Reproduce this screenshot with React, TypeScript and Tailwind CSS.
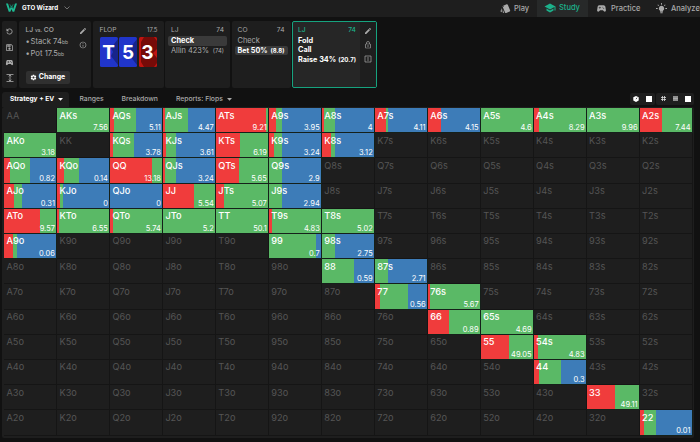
import React from "react";
import { MdEdit, MdInfoOutline, MdSchool, MdSettings, MdOutlineLock, MdRefresh, MdOutlineSave, MdSportsEsports, MdStyle } from "react-icons/md";

// Hand -> [raise share, call share, EV]; the remaining share is fold.
const HANDS: Record<string, [number, number, string]> = {
  AKs: [0, 1, "7.56"], AQs: [0.07, 0.43, "5.11"], AJs: [0.04, 0.44, "4.47"], ATs: [0.965, 0.035, "9.21"],
  A9s: [0.13, 0.12, "3.95"], A8s: [0.035, 0.215, "4"], A7s: [0.21, 0.035, "4.11"], A6s: [0.245, 0, "4.15"],
  A5s: [0, 1, "4.6"], A4s: [0.1, 0.9, "8.29"], A3s: [0, 1, "9.96"], A2s: [0.43, 0.57, "7.44"],
  AKo: [0, 1, "3.18"], KQs: [0.055, 0.405, "3.78"], KJs: [0.055, 0.195, "3.61"], KTs: [0.455, 0.545, "6.19"],
  K9s: [0.1, 0.15, "3.24"], K8s: [0.17, 0.08, "3.12"],
  AQo: [0.11, 0.395, "0.82"], KQo: [0.13, 0.29, "0.14"], QQ: [0.8, 0.2, "13.18"], QJs: [0.035, 0.215, "3.24"],
  QTs: [0.435, 0.565, "5.65"], Q9s: [0, 0.25, "2.9"],
  AJo: [0.2, 0.14, "0.31"], KJo: [0.065, 0.05, "0"], QJo: [0, 0, "0"], JJ: [0.59, 0.41, "5.54"],
  JTs: [0.155, 0.845, "5.07"], J9s: [0, 0.25, "2.94"],
  ATo: [0.69, 0.31, "9.57"], KTo: [0.04, 0.96, "6.55"], QTo: [0.055, 0.945, "5.74"], JTo: [0, 1, "5.2"],
  TT: [0, 1, "50.1"], T9s: [0.055, 0.945, "4.83"], T8s: [0, 1, "5.02"],
  A9o: [0.17, 0.085, "0.06"], "99": [0, 0.905, "0.7"], "98s": [0, 0.25, "2.75"],
  "88": [0, 0.61, "0.59"], "87s": [0, 0.25, "2.71"], "77": [0.1, 0.54, "0.56"], "76s": [0.03, 0.97, "5.67"],
  "66": [0.4, 0.6, "0.89"], "65s": [0, 1, "4.69"], "55": [0.54, 0.46, "49.05"], "54s": [0.08, 0.92, "4.83"],
  "44": [0.1, 0.41, "0.3"], "33": [0.53, 0.47, "49.11"], "22": [0.07, 0.23, "0.01"],
};
const RANKS = "AKQJT98765432".split("");

function Cell({ hand }: { hand: string }) {
  const d = HANDS[hand];
  if (!d)
    return (
      <div className="border-r border-b border-[#151515] bg-[#1e1e1e] pt-[1.5px] pl-[2.5px] text-[9.2px] leading-[11px] text-[#555]">{hand}</div>
    );
  const a = d[0] * 100;
  const b = (d[0] + d[1]) * 100;
  return (
    <div
      className="flex flex-col justify-between overflow-hidden border-r border-b border-[#15201a] bg-clip-padding pt-[1.5px] pr-[1px] pl-[2.5px] text-white"
      style={{ backgroundImage: `linear-gradient(90deg,#f03c3c ${a}%,#5ab966 ${a}%,#5ab966 ${b}%,#3d7cb8 ${b}%)` }}
    >
      <span className="text-[9.2px] leading-[11px] font-medium">{hand}</span>
      <span className="self-end text-[7.5px] leading-[9px]">{d[2]}</span>
    </div>
  );
}

function Card({ rank, red }: { rank: string; red?: boolean }) {
  return (
    <div className={`grid h-[30px] w-[18px] place-items-center overflow-hidden rounded-[1.5px] ${red ? "bg-[#c01410]" : "bg-[#2035ca]"}`}>
      <svg viewBox="0 0 18 30" className="col-start-1 row-start-1 h-[30px] w-[18px]">
        {red ? (
          <path d="M5 0h10l3 4v8l-4 4 4 5v5l-3 4H5l-3-5V5z" fill="#760b08" />
        ) : (
          <path d="M18 2v26l-7-9 2-4-2-4z" fill="#17248b" />
        )}
      </svg>
      <span className="col-start-1 row-start-1 text-[19px] leading-none font-bold text-white">{rank}</span>
    </div>
  );
}

function Caret() {
  return (
    <svg viewBox="0 0 5 3" className="mb-[1px] ml-[4px] h-[3px] w-[5px]" fill="currentColor">
      <path d="M0 0h5L2.5 2.7z" />
    </svg>
  );
}

function Panel({ name, children, width }: { name: string; children: React.ReactNode; width: string }) {
  return (
    <div className={`${width} shrink-0 rounded-[2px] bg-[#1e1e1e] px-[3px] pt-[4px] text-[#aaa]`}>
      <div className="flex justify-between px-[3px] text-[6.7px] leading-[10px]">
        <span>{name}</span>
        <span>74</span>
      </div>
      <div className="mt-[1px] text-[7.4px] leading-[9.5px]">{children}</div>
    </div>
  );
}

export default function App() {
  return (
    <div className="flex h-[442px] w-[700px] flex-col overflow-hidden bg-[#111] font-['Inter','Liberation_Sans',sans-serif] text-[#aaa]">
      <header className="flex h-[17px] shrink-0 items-center bg-[#1e1e1e] pb-[2px] whitespace-nowrap">
        <svg viewBox="0 0 12 9" className="ml-[6px] h-[9px] w-[11px]" fill="none">
          <path d="M0 0h2.2l2 6L6 2.2 7.8 6l2-6H12L9 9H7.2L6 6 4.8 9H3z" fill="#1db992" />
          <path d="M4.2 1L6 5l1.8-4" stroke="#137961" />
        </svg>
        <span className="ml-[5px] text-[6.2px] font-bold text-white">GTO Wizard</span>
        <svg viewBox="0 0 6 4" className="ml-[6px] h-[4px] w-[6px]" fill="none" stroke="#888" strokeWidth=".8"><path d="M.5.5L3 3 5.5.5" /></svg>
        <nav className="ml-auto flex h-[17px] translate-y-[1px] text-[7.5px] font-medium">
          <div className="flex w-[37px] items-center gap-[3px]"><MdStyle size={11} />Play</div>
          <div className="flex w-[51px] items-center gap-[3px] bg-[#272929] pb-[1px] pl-[7px] text-[#1cb18b]"><MdSchool size={12} />Study</div>
          <div className="flex w-[60px] items-center gap-[4px] pl-[8px]"><MdSportsEsports size={11} />Practice</div>
          <div className="flex w-[52px] items-center gap-[4px] pl-[8px]">
            <svg viewBox="0 0 12 12" className="h-[11px] w-[11px] shrink-0" fill="currentColor">
              <path d="M6 3a3 3 0 0 0-1.6 5.5v1h3.2v-1A3 3 0 0 0 6 3zM4.7 10h2.6v1.3H4.7zM5.5 0h1v1.8h-1zM0 5.5h1.8v1H0zM10.2 5.5H12v1h-1.8zM1.5 2.2l.7-.7 1.2 1.2-.7.7zM9.8 1.5l.7.7-1.2 1.2-.7-.7z" />
            </svg>
            Analyze
          </div>
        </nav>
      </header>

      <section className="mt-[4px] ml-[2px] flex h-[67px] shrink-0 gap-[1.5px] whitespace-nowrap">
        <aside className="flex w-[15px] shrink-0 flex-col items-center justify-between rounded-[2px] bg-[#1e1e1e] pt-[6px] pb-[6px]">
          <MdRefresh size={9} className="-scale-x-100" />
          <MdOutlineSave size={9} />
          <MdSportsEsports size={9} />
          <svg viewBox="0 0 8 8" className="h-[8px] w-[8px]" fill="none" stroke="currentColor" strokeWidth=".8"><path d="M.5.5h7M.5 7.5h7M4 1v6M2.7 2.3L4 1l1.3 1.3M2.7 5.7L4 7l1.3-1.3" /></svg>
        </aside>
        <div className="flex w-[72.5px] shrink-0 justify-between rounded-[2px] bg-[#1e1e1e] pt-[4px] pr-[4px] pl-[7px]">
          <div className="flex flex-col items-start">
            <div className="text-[6.7px] leading-[10px] font-medium">LJ <span className="text-[5px]">vs.</span> CO</div>
            <div className="mt-[1px] text-[7.7px] leading-[11px]">
              <div className="flex h-[11.5px] items-baseline"><span className="w-[5px]">•</span>Stack 74<span className="text-[5px]">bb</span></div>
              <div className="flex h-[11.5px] items-baseline"><span className="w-[5px]">•</span>Pot 17.5<span className="text-[5px]">bb</span></div>
            </div>
            <div className="mt-[11.5px] flex h-[13px] w-[44px] items-center justify-center gap-[2px] rounded-[2px] bg-[#303030] text-[7px] font-bold text-white"><MdSettings size={7} />Change</div>
          </div>
          <div className="flex flex-col gap-[6px] pt-[1.5px]"><MdEdit size={8} /><MdInfoOutline size={8} /></div>
        </div>
        <div className="w-[71px] shrink-0 rounded-[2px] bg-[#1e1e1e] pt-[4px] pr-[6px] pl-[7px]">
          <div className="flex justify-between text-[6.7px] leading-[10px]"><span>FLOP</span><span className="text-[6px]">17.5</span></div>
          <div className="mt-[2px] flex gap-[1.5px]"><Card rank="T" /><Card rank="5" /><Card rank="3" red /></div>
        </div>
        <Panel name="LJ" width="w-[65px]">
          <div className="rounded-[2px] bg-[#3a3a3a] px-[3px] font-bold text-white">Check</div>
          <div className="flex items-center px-[3px]">Allin 423%<span className="ml-auto text-[6px]">(74)</span></div>
        </Panel>
        <Panel name="CO" width="w-[59px]">
          <div className="px-[3px]">Check</div>
          <div className="flex items-center rounded-[2px] bg-[#3a3a3a] px-[3px] text-[7.2px] font-bold text-white">Bet 50%<span className="ml-auto text-[6px]">(8.8)</span></div>
        </Panel>
        <div className="flex w-[85px] shrink-0 justify-between rounded-[2px] border border-[#16a37f] bg-[#262626] pl-[5px]">
          <div className="w-[58px] pt-[3px]">
            <div className="flex justify-between text-[6.7px] leading-[10px] font-medium text-[#1cb18b]"><span>LJ</span><span>74</span></div>
            <div className="mt-[1px] text-[7.3px] leading-[9.4px] font-bold text-white">Fold<br />Call<div className="flex items-center justify-between">Raise 34%<span className="text-[6.1px]">(20.7)</span></div></div>
          </div>
          <div className="flex w-[16px] flex-col items-center gap-[6.2px] bg-[#1e1e1e] pt-[4.5px]">
            <MdEdit size={8} /><MdOutlineLock size={8} />
            <svg viewBox="0 0 8 8" className="h-[8px] w-[8px]" fill="none" stroke="currentColor" strokeWidth=".7"><path d="M3 1H1v6h2M5 1h2v6H5M4 0v8" /></svg>
          </div>
        </div>
      </section>

      <div className="mt-[4px] ml-[2px] flex h-[15px] shrink-0 items-center text-[6.8px] font-medium whitespace-nowrap">
        <div className="flex h-[15px] w-[67px] items-center rounded-t-[3px] bg-[#1e1e1e] pl-[8px] text-[6.6px] font-bold text-white">Strategy + EV<Caret /></div>
        <span className="ml-[10.5px] w-[42px]">Ranges</span>
        <span className="w-[54.5px]">Breakdown</span>
        <span>Reports: Flops</span>
        <Caret />
        <div className="mr-[6px] ml-auto flex h-[12px] -translate-y-[1px] gap-[1px]">
          <div className="flex w-[25px] items-center justify-around rounded-[2px] bg-[#1e1e1e]">
            <svg viewBox="0 0 6 6" className="h-[6px] w-[6px]"><path d="M3 0l2.7 1.3v3.2L3 6 .3 4.5V1.3z" fill="#fff" /><path d="M3 3.2l1-1.5" stroke="#222" strokeWidth=".8" /></svg>
            <span className="h-[6px] w-[6px] bg-white" />
          </div>
          <div className="flex w-[38px] items-center justify-between rounded-[2px] bg-[#1e1e1e] pr-[3px] pl-[5px]">
            <svg viewBox="0 0 5 5" className="h-[5px] w-[5px]"><path d="M1.5 0v5M3.5 0v5M0 1.5h5M0 3.5h5" stroke="#ddd" strokeWidth=".8" /><path d="M1.9 1.9h1.2v1.2H1.9z" fill="#1e1e1e" /></svg>
            <svg viewBox="0 0 5 5" className="h-[5px] w-[5px]"><path d="M0 0h5v5H0z" fill="#777" /><path d="M0 1h5M0 2.5h5M0 4h5" stroke="#ccc" strokeWidth=".6" /></svg>
            <span className="h-[6px] w-[6px] bg-white" />
          </div>
        </div>
      </div>

      <main className="ml-[2px] h-[331px] w-[692px] shrink-0 rounded-[2px] bg-[#1e1e1e] pt-[1px] pl-[2px]">
        <div className="grid h-[327.5px] w-[688.5px] [grid-template-columns:repeat(13,minmax(0,1fr))] [grid-template-rows:repeat(13,minmax(0,1fr))]">
          {RANKS.map((r, i) => RANKS.map((c, j) => {
            const hand = i === j ? r + c : j > i ? `${r}${c}s` : `${c}${r}o`;
            return <Cell key={hand} hand={hand} />;
          }))}
        </div>
      </main>
    </div>
  );
}
